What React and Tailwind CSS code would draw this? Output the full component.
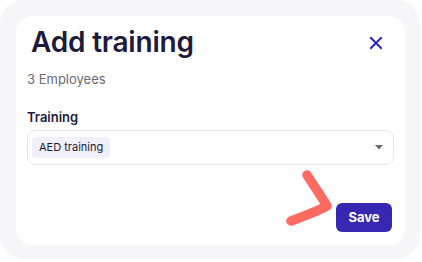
import React from 'react';

export default function App() {
  return (
    <div className="w-[422px] h-[262px] bg-white" style={{ fontFamily: 'Inter, "Noto Sans", sans-serif' }}>
      <div className="w-[420px] h-[259px] bg-[#f6f6f9] rounded-[24px] pt-4 pl-4">
        <div className="relative w-[389px] h-[229px] bg-white rounded-[16px] px-[11px] pt-[9px]">
          {/* Header */}
          <div className="flex items-center justify-between">
            <h1 className="ml-[4px] text-[28px] leading-[34px] font-semibold text-[#1d1a3a] tracking-[-0.2px]">
              Add training
            </h1>
            <button className="mr-[11px] mt-[2px] text-[#3a2bb3]">
              <svg width="14" height="14" viewBox="0 0 14 14" fill="none" stroke="currentColor" strokeWidth="2.2" strokeLinecap="square">
                <path d="M2 2 L12 12 M12 2 L2 12" />
              </svg>
            </button>
          </div>
          <p className="mt-[12px] text-[13px] leading-[16px] text-[#6b6a72]">3 Employees</p>

          {/* Training select */}
          <label className="block mt-[22px] text-[13px] leading-[16px] font-semibold text-[#1d1a3a]">Training</label>
          <div className="mt-[5px] h-[35px] flex items-center justify-between border border-[#e6e6ea] rounded-[8px] pl-[4px] pr-[10px]">
            <span className="px-[7px] h-[21px] flex items-center rounded-[4px] bg-[#f1effa] text-[11px] text-[#1d1a3a]">
              AED training
            </span>
            <svg width="8" height="5" viewBox="0 0 8 5">
              <path d="M0 0 H8 L4 4.5 Z" fill="#6b6a72" />
            </svg>
          </div>

          {/* Footer */}
          <div className="mt-[38px] flex justify-end pr-[2px]">
            <button className="w-[56px] h-[29px] rounded-[6px] bg-[#3827b1] text-white text-[13px] font-bold">
              Save
            </button>
          </div>

          {/* Hand-drawn arrow annotation */}
          <svg className="absolute left-[270px] top-[152px]" width="50" height="60" viewBox="0 0 50 60">
            <path
              d="M21 7 C28 18 35 28 41 38 C30 44 18 48 5 53"
              fill="none"
              stroke="#ff6b60"
              strokeWidth="9.5"
              strokeLinecap="round"
              strokeLinejoin="round"
            />
          </svg>
        </div>
      </div>
    </div>
  );
}
